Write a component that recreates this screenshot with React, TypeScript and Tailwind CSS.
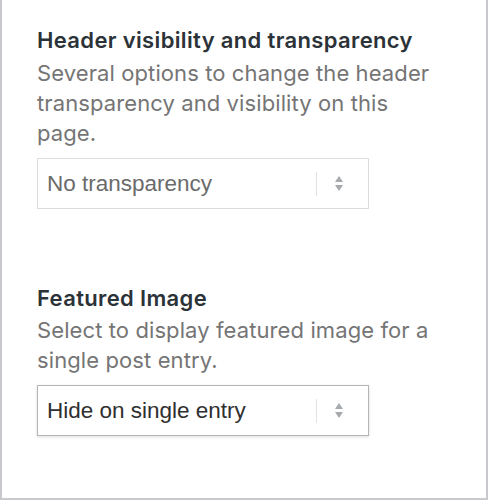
import React from "react";

function Arrows() {
  return (
    <svg width="8" height="15" viewBox="0 0 8 15" aria-hidden="true">
      <polygon points="4,0 8,6 0,6" fill="#a7aaad" />
      <polygon points="0,9 8,9 4,15" fill="#a7aaad" />
    </svg>
  );
}

function Select({ value, focused }: { value: string; focused?: boolean }) {
  return (
    <div
      className={
        focused
          ? "flex h-[51px] w-[332px] items-center border border-[#b4b5b8] bg-white shadow-[0_1px_3px_rgba(0,0,0,0.14)]"
          : "flex h-[51px] w-[332px] items-center border border-[#dcdcde] bg-white"
      }
    >
      <span
        className={
          focused
            ? "flex-1 pl-[9px] text-[22.5px] text-[#2f2f2f] [font-family:'Liberation_Sans',Arial,sans-serif]"
            : "flex-1 pl-[9px] text-[22.5px] text-[#6b6b6b] [font-family:'Liberation_Sans',Arial,sans-serif]"
        }
      >
        {value}
      </span>
      <span className="h-[24px] w-px bg-[#e2e2e4]" />
      <span className="flex w-[44px] items-center justify-center">
        <Arrows />
      </span>
      <span className="w-[7px]" />
    </div>
  );
}

export default function App() {
  return (
    <div className="h-[500px] w-[488px] border-x-2 border-b-2 border-[#c8c9cc] bg-white px-[35px] pt-[26px] [font-family:Inter,'Noto_Sans',sans-serif]">
      <section>
        <h2 className="text-[22px] font-semibold leading-[28px] tracking-[0.35px] text-[#2c3338]">
          Header visibility and transparency
        </h2>
        <p className="mt-[4px] max-w-[402px] text-[22px] leading-[30px] tracking-[0.1px] text-[#757575]">
          Several options to change the header transparency and visibility on this page.
        </p>
        <div className="mt-[10px]">
          <Select value="No transparency" />
        </div>
      </section>
      <section className="mt-[75px]">
        <h2 className="text-[22px] font-semibold leading-[28px] tracking-[0.35px] text-[#2c3338]">
          Featured Image
        </h2>
        <p className="mt-[3px] max-w-[402px] text-[22px] leading-[30px] tracking-[0.1px] text-[#757575]">
          Select to display featured image for a single post entry.
        </p>
        <div className="mt-[10px]">
          <Select value="Hide on single entry" focused />
        </div>
      </section>
    </div>
  );
}
